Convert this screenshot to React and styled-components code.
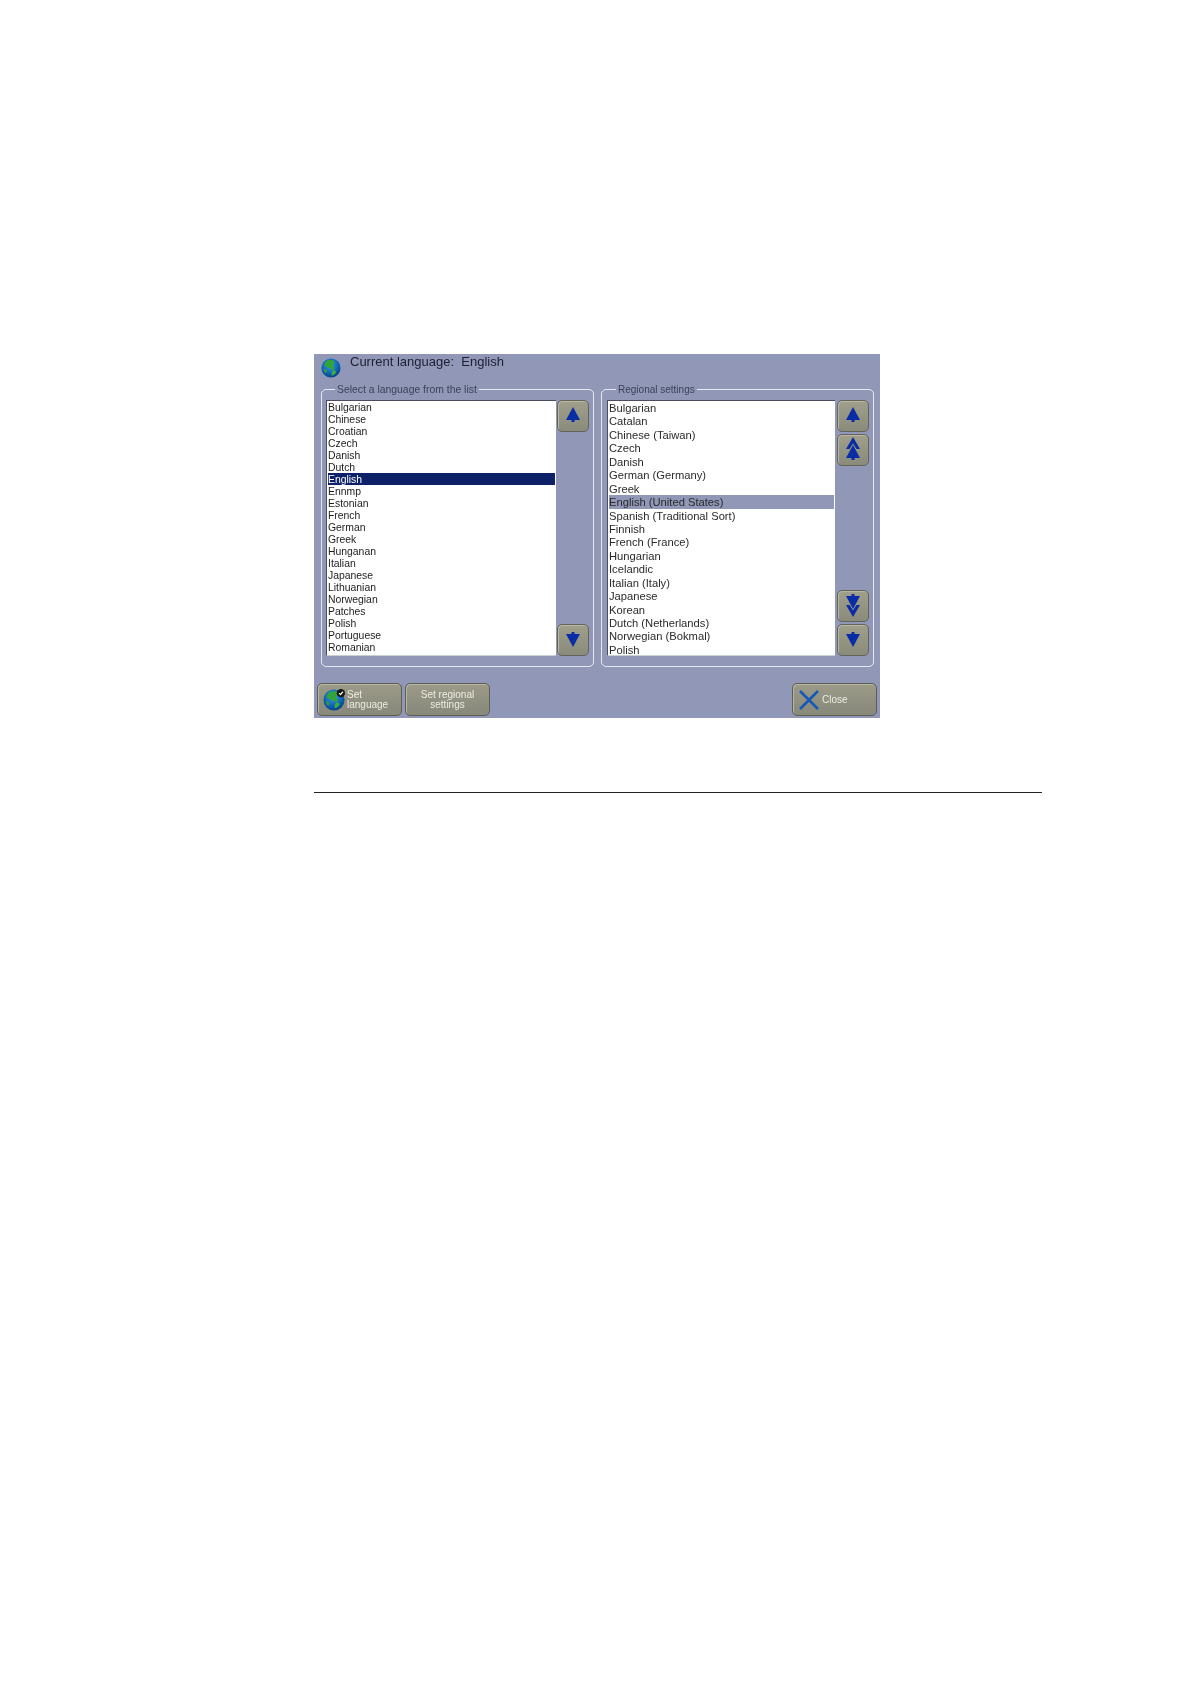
import React from "react";
import styled, { createGlobalStyle } from "styled-components";

const languages = [
  "Bulgarian", "Chinese", "Croatian", "Czech", "Danish", "Dutch", "English", "Ennmp",
  "Estonian", "French", "German", "Greek", "Hunganan", "Italian", "Japanese", "Lithuanian",
  "Norwegian", "Patches", "Polish", "Portuguese", "Romanian",
];

const regions = [
  "Bulgarian", "Catalan", "Chinese (Taiwan)", "Czech", "Danish", "German (Germany)", "Greek",
  "English (United States)", "Spanish (Traditional Sort)", "Finnish", "French (France)", "Hungarian",
  "Icelandic", "Italian (Italy)", "Japanese", "Korean", "Dutch (Netherlands)", "Norwegian (Bokmal)", "Polish",
];

function Globe({ size, check }) {
  const id = check ? "globeB" : "globeA";
  return (
    <svg width={size} height={size} viewBox="0 0 24 24">
      <defs>
        <radialGradient id={id} cx="0.45" cy="0.35" r="0.7">
          <stop offset="0" stopColor="#3f9be8" />
          <stop offset="0.65" stopColor="#0d5fb0" />
          <stop offset="1" stopColor="#083a78" />
        </radialGradient>
      </defs>
      <circle cx="12" cy="12" r="11.5" fill={`url(#${id})`} />
      <path d="M6 4c3-2 8-2 10 0 1 2-1 3-2 5 2 1 3 3 1 5-2 1-3-1-5-2-2-1-5-1-6-3 0-2 1-3 2-5z" fill="#2fa53a" />
      <path d="M14 15c2-1 4 0 4 2-1 2-3 4-5 4-1-2 0-4 1-6z" fill="#3cae3c" />
      <path d="M3 13c2 0 4 1 4 3s-1 2-2 2c-1-1-2-3-2-5z" fill="#2f9a48" />
      {check && <circle cx="19.5" cy="4.5" r="4.5" fill="#151515" />}
      {check && <path d="M17.5 4.5l1.6 1.7 2.6-3.2" fill="none" stroke="#fff" strokeWidth="1.3" />}
    </svg>
  );
}

function Arrow({ down, double }) {
  const tree = "M8 0L15 13H9.5V15H6.5V13H1z";
  return (
    <svg width="16" height={double ? 24 : 16} viewBox={double ? "0 0 16 24" : "0 0 16 16"}>
      <g fill="#0a2ca4" transform={down ? `rotate(180 8 ${double ? 12 : 8})` : undefined}>
        {double && <path d="M8 0L15 12H11.5L8 6.5 4.5 12H1z" />}
        <path d={tree} transform={double ? "translate(0 8)" : undefined} />
      </g>
    </svg>
  );
}

export default function App() {
  return (
    <>
      <GlobalStyle />
      <Page>
        <Panel>
          <Header>
            <Globe size={20} />
            <HeaderText>Current language:&nbsp; English</HeaderText>
          </Header>

          <Columns>
            <Group $left={4}>
              <Caption $indent={9} $size={10.4}>Select a language from the list</Caption>
              <GroupBody $gap={1}>
                <List $width={230}>
                  {languages.map((name) => (
                    <LangRow key={name} $selected={name === "English"}>{name}</LangRow>
                  ))}
                </List>
                <ScrollColumn>
                  <ScrollButton><Arrow /></ScrollButton>
                  <ScrollSpacer />
                  <ScrollButton><Arrow down /></ScrollButton>
                </ScrollColumn>
              </GroupBody>
            </Group>

            <Group $left={5}>
              <Caption $indent={9} $size={10}>Regional settings</Caption>
              <GroupBody $gap={2}>
                <List $width={228}>
                  {regions.map((name) => (
                    <RegionRow key={name} $selected={name === "English (United States)"}>{name}</RegionRow>
                  ))}
                </List>
                <ScrollColumn>
                  <ScrollButton><Arrow /></ScrollButton>
                  <ScrollButton><Arrow double /></ScrollButton>
                  <ScrollSpacer />
                  <ScrollButton><Arrow down double /></ScrollButton>
                  <ScrollButton><Arrow down /></ScrollButton>
                </ScrollColumn>
              </GroupBody>
            </Group>
          </Columns>

          <Footer>
            <ActionButton>
              <Globe size={22} check />
              <ActionLabel $left>Set<br />language</ActionLabel>
            </ActionButton>
            <ActionButton>
              <ActionLabel>Set regional<br />settings</ActionLabel>
            </ActionButton>
            <FooterSpacer />
            <ActionButton>
              <svg width="22" height="22" viewBox="0 0 22 22">
                <path d="M2 2L20 20M20 2L2 20" stroke="#1458b8" strokeWidth="2.6" fill="none" />
              </svg>
              <ActionLabel $left>Close</ActionLabel>
            </ActionButton>
          </Footer>
        </Panel>
        <Rule />
      </Page>
    </>
  );
}

const GlobalStyle = createGlobalStyle`
  body {
    margin: 0;
    background: #ffffff;
    font-family: "Liberation Sans", Arial, sans-serif;
  }
`;

const Page = styled.div`
  width: 1190px;
  height: 1684px;
  padding: 354px 0 0 314px;
  box-sizing: border-box;
`;

const Panel = styled.div`
  width: 566px;
  height: 364px;
  box-sizing: border-box;
  padding: 0 3px 2px;
  background: #9097b7;
  display: flex;
  flex-direction: column;
  filter: blur(0.4px);
`;

const Header = styled.div`
  height: 29px;
  display: flex;
  align-items: flex-start;
  gap: 9px;
  padding: 4px 0 0 4px;
  box-sizing: border-box;
`;

const HeaderText = styled.div`
  font-size: 13px;
  line-height: 16px;
  color: #1e2033;
  margin-top: -4px;
`;

const Columns = styled.div`
  display: flex;
  gap: 7px;
  padding: 0 3px 0 4px;
`;

const Group = styled.fieldset`
  width: 273px;
  height: 284px;
  box-sizing: border-box;
  margin: 0;
  padding: 5px 4px 11px ${(p) => p.$left}px;
  border: 1px solid #e6e8f0;
  border-radius: 5px;
`;

const Caption = styled.legend`
  height: 12px;
  margin-left: ${(p) => p.$indent}px;
  padding: 0 2px;
  font-size: ${(p) => p.$size}px;
  line-height: 14px;
  color: #3d4258;
`;

const GroupBody = styled.div`
  display: flex;
  gap: ${(p) => p.$gap}px;
  height: 256px;
`;

const List = styled.ul`
  list-style: none;
  width: ${(p) => p.$width}px;
  height: 100%;
  margin: 0;
  padding: 0 1px;
  box-sizing: border-box;
  overflow: hidden;
  background: #ffffff;
  border-top: 1px solid #4a4d60;
  border-left: 1px solid #4a4d60;
  border-bottom: 1px solid #c9d0d0;
`;

const LangRow = styled.li`
  height: 12px;
  line-height: 14px;
  font-size: 10.4px;
  white-space: nowrap;
  color: ${(p) => (p.$selected ? "#ffffff" : "#1c1c1c")};
  background: ${(p) => (p.$selected ? "#0c2168" : "transparent")};
`;

const RegionRow = styled.li`
  height: 13.45px;
  line-height: 15.45px;
  font-size: 11.2px;
  white-space: nowrap;
  color: #2a2a2a;
  background: ${(p) => (p.$selected ? "#9097b7" : "transparent")};
`;

const ScrollColumn = styled.div`
  width: 32px;
  display: flex;
  flex-direction: column;
  gap: 2px;
`;

const ScrollSpacer = styled.div`
  flex: 1;
`;

const ScrollButton = styled.button`
  width: 32px;
  height: 32px;
  padding: 0 0 2px;
  box-sizing: border-box;
  display: flex;
  align-items: center;
  justify-content: center;
  background: linear-gradient(#a09f8c, #8a8b7b);
  border: 1px solid #62645a;
  border-radius: 5px;
  box-shadow: inset 1px 1px 0 #b8b7a6;
`;

const Footer = styled.div`
  margin-top: 16px;
  display: flex;
  gap: 3px;
`;

const FooterSpacer = styled.div`
  flex: 1;
`;

const ActionButton = styled.button`
  width: 85px;
  height: 33px;
  padding: 0 0 0 5px;
  box-sizing: border-box;
  display: flex;
  align-items: center;
  justify-content: center;
  gap: 2px;
  background: linear-gradient(#9c9b88, #87887b);
  border: 1px solid #5c5e54;
  border-radius: 5px;
  box-shadow: inset 1px 1px 0 #b8b7a6;
`;

const ActionLabel = styled.span`
  flex: 1;
  font-family: "Liberation Sans", Arial, sans-serif;
  font-size: 10px;
  line-height: 9.5px;
  text-align: ${(p) => (p.$left ? "left" : "center")};
  color: #ecece2;
  padding-right: ${(p) => (p.$left ? "0" : "5px")};
`;

const Rule = styled.div`
  width: 728px;
  height: 1px;
  margin-top: 74px;
  background: #222222;
`;
